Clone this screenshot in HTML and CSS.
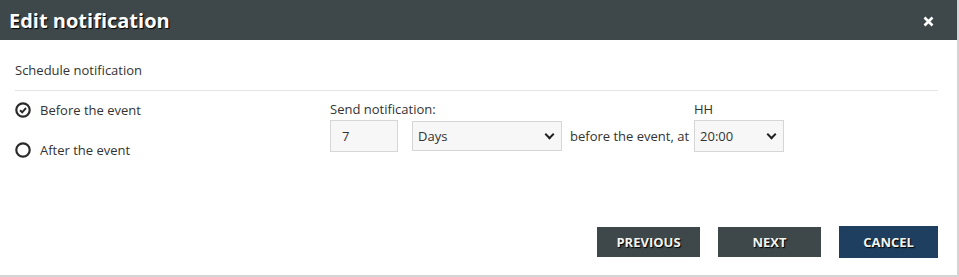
FILE: index.html
```html
<!DOCTYPE html>
<html lang="en">
<head>
    <meta charset="UTF-8">
    <title>Edit notification</title>
    <link rel="stylesheet" href="styles.css">
</head>
<body>
    <div class="Dialog">
        <div class="Header">
            <h1 class="Titulo">Edit notification</h1>
            <svg class="Cerrar" width="11" height="11" viewBox="0 0 11 11">
                <path d="M1.5 1.5 L9.5 9.5 M9.5 1.5 L1.5 9.5" stroke="#fff" stroke-width="2.6"/>
            </svg>
        </div>

        <div class="Cuerpo">
            <p class="Seccion">Schedule notification</p>

            <div class="Fila">
                <div class="Opciones">
                    <label class="Opcion">
                        <svg width="16" height="16" viewBox="0 0 16 16">
                            <circle cx="8" cy="8" r="6.7" fill="none" stroke="#2b2b2b" stroke-width="2.2"/>
                            <path d="M5 8.2 L7.2 10.3 L11 6" fill="none" stroke="#2b2b2b" stroke-width="1.9"/>
                        </svg>
                        Before the event
                    </label>
                    <label class="Opcion">
                        <svg width="16" height="16" viewBox="0 0 16 16">
                            <circle cx="8" cy="8" r="6.7" fill="none" stroke="#2b2b2b" stroke-width="2.2"/>
                        </svg>
                        After the event
                    </label>
                </div>

                <div class="Campos">
                    <div class="Grupo">
                        <span class="Etiqueta">Send notification:</span>
                        <div class="Linea">
                            <div class="Caja Numero">7</div>
                            <div class="Caja Lista Dias">Days <span class="Flecha"></span></div>
                            <span class="Texto">before the event, at</span>
                        </div>
                    </div>
                    <div class="Grupo">
                        <span class="Etiqueta">HH</span>
                        <div class="Caja Lista Hora">20:00 <span class="Flecha"></span></div>
                    </div>
                </div>
            </div>

            <div class="Botones">
                <button class="Boton">PREVIOUS</button>
                <button class="Boton">NEXT</button>
                <button class="Boton Cancelar">CANCEL</button>
            </div>
        </div>
    </div>
</body>
</html>
```

FILE: styles.css
```css
body {
    margin: 0;
    font-family: 'Open Sans', sans-serif;
    font-size: 13px;
    color: #333;
    background: #fff;
}

.Dialog {
    width: 957px;
    height: 275px;
    border-right: 2px solid #d4d4d4;
    border-bottom: 2px solid #d4d4d4;
    box-sizing: content-box;
}

.Header {
    height: 40px;
    background: #3e4749;
    display: flex;
    align-items: center;
    justify-content: space-between;
    padding: 0 23px 0 9px;
}

.Titulo {
    margin: 0;
    font-size: 20px;
    font-weight: 700;
    color: #fff;
    text-shadow: 1px 1px 1px #000;
}

.Cerrar {
    margin-top: 2px;
}

.Cuerpo {
    padding: 0 19px 0 15px;
}

.Seccion {
    margin: 0;
    padding: 21px 0 11px;
    border-bottom: 1px solid #e3e3e3;
    line-height: 18px;
}

.Fila {
    display: flex;
    align-items: flex-start;
    padding-top: 10px;
}

.Opciones {
    width: 315px;
    display: flex;
    flex-direction: column;
    gap: 22px;
}

.Opcion {
    display: flex;
    align-items: center;
    gap: 9px;
    line-height: 18px;
}

.Campos {
    display: flex;
    align-items: flex-end;
    gap: 5px;
    margin-top: -1px;
}

.Grupo {
    display: flex;
    flex-direction: column;
}

.Etiqueta {
    line-height: 18px;
    margin-bottom: 2px;
}

.Linea {
    display: flex;
    align-items: center;
}

.Caja {
    height: 30px;
    border: 1px solid #d6d6d6;
    box-sizing: border-box;
    background: #f7f7f7;
    display: flex;
    align-items: center;
    padding-left: 11px;
}

.Numero {
    width: 68px;
    height: 32px;
}

.Lista {
    justify-content: space-between;
    padding-right: 8px;
    padding-left: 5px;
}

.Dias {
    width: 150px;
    margin-left: 14px;
}

.Hora {
    width: 90px;
    height: 32px;
}

.Flecha {
    width: 5px;
    height: 5px;
    border-right: 2px solid #222;
    border-bottom: 2px solid #222;
    transform: rotate(45deg);
    margin-top: -4px;
}

.Texto {
    margin-left: 8px;
}

.Botones {
    display: flex;
    justify-content: flex-end;
    align-items: center;
    gap: 18px;
    margin-top: 67px;
}

.Boton {
    font-family: 'Open Sans', sans-serif;
    font-size: 13px;
    font-weight: 700;
    color: #f1f5f1;
    background: #3e4749;
    border: none;
    width: 103px;
    height: 30px;
    text-shadow: 1px 1px 1px #000;
}

.Cancelar {
    width: 99px;
    height: 32px;
    background: #1e3f5f;
}
```
